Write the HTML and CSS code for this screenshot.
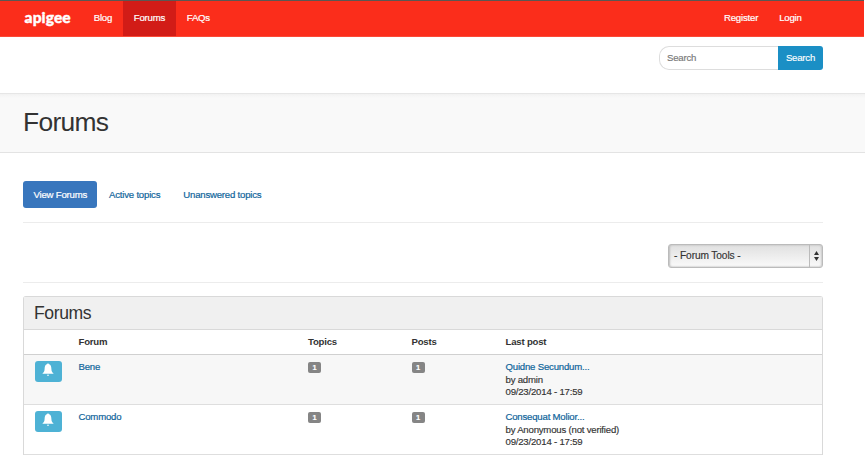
FILE: index.html
```html
<!DOCTYPE html>
<html lang="en">
<head>
<meta charset="utf-8">
<title>Forums</title>
<link rel="stylesheet" href="styles.css">
</head>
<body>
<nav class="navbar">
  <a class="brand">apigee</a>
  <a class="nav-link">Blog</a>
  <a class="nav-link active">Forums</a>
  <a class="nav-link">FAQs</a>
  <div class="account"><a>Register</a><a>Login</a></div>
</nav>
<form class="search">
  <input class="search-input" type="text" placeholder="Search">
  <button class="search-button" type="button">Search</button>
</form>
<header class="page-header"><h1>Forums</h1></header>
<main class="content">
  <div class="tabs">
    <a class="tab selected">View Forums</a>
    <a class="tab">Active topics</a>
    <a class="tab">Unanswered topics</a>
  </div>
  <div class="tools">
    <div class="select"><span class="select-label">- Forum Tools -</span>
      <span class="select-arrows"><svg width="5" height="10" viewBox="0 0 5 10"><path d="M0 4L2.5 0L5 4ZM0 6H5L2.5 10Z" fill="#333"/></svg></span>
    </div>
  </div>
  <section class="panel">
    <h2>Forums</h2>
    <div class="row head"><span></span><span>Forum</span><span>Topics</span><span>Posts</span><span>Last post</span></div>
    <div class="row striped">
      <span class="bell"><svg width="12" height="14" viewBox="0 0 12 14"><path d="M5.2 1.1Q6 -.4 6.8 1.1C8.9 1.7 9.3 3.8 9.4 6C9.5 8.2 10 9.3 11.4 10.2V10.8H.6V10.2C2 9.3 2.5 8.2 2.6 6C2.7 3.8 3.1 1.7 5.2 1.1ZM4.9 11.7H7.1Q6 14.2 4.9 11.7Z" fill="#fff"/></svg></span>
      <a>Bene</a><span><b class="badge">1</b></span><span><b class="badge">1</b></span>
      <div><a>Quidne Secundum...</a><br>by admin<br>09/23/2014 - 17:59</div>
    </div>
    <div class="row">
      <span class="bell"><svg width="12" height="14" viewBox="0 0 12 14"><path d="M5.2 1.1Q6 -.4 6.8 1.1C8.9 1.7 9.3 3.8 9.4 6C9.5 8.2 10 9.3 11.4 10.2V10.8H.6V10.2C2 9.3 2.5 8.2 2.6 6C2.7 3.8 3.1 1.7 5.2 1.1ZM4.9 11.7H7.1Q6 14.2 4.9 11.7Z" fill="#fff"/></svg></span>
      <a>Commodo</a><span><b class="badge">1</b></span><span><b class="badge">1</b></span>
      <div><a>Consequat Molior...</a><br>by Anonymous (not verified)<br>09/23/2014 - 17:59</div>
    </div>
  </section>
</main>
</body>
</html>
```
FILE: styles.css
```css
* { box-sizing: border-box; }
html { background: #fff; overflow: hidden; }
body {
  margin: 0;
  height: 456px;
  overflow: hidden;
  color: #333;
  font: 9.6px/12.5px "Liberation Sans", Arial, sans-serif;
  letter-spacing: -.2px;
  -webkit-text-stroke: .15px;
}
a { color: #0f659b; -webkit-text-stroke: .2px; }
.navbar {
  display: flex;
  height: 37px;
  margin-right: 1px;
  padding-left: 24px;
  border-top: 1px solid #5b5753;
  border-bottom: 1px solid #fa4a37;
  background: #fb2d1b;
  line-height: 34px;
}
.navbar a { color: #fff; }
.navbar .brand {
  width: 59px;
  padding-left: .6px;
  font: 900 15.6px/33px Lato, sans-serif;
  letter-spacing: .05px;
  -webkit-text-stroke: .4px;
}
.nav-link { padding: 0 10.7px; }
.nav-link.active { width: 53px; margin-left: .3px; background: #d21c17; }
.account { display: flex; gap: 21px; margin-left: auto; padding-right: 62.4px; }
.search {
  display: flex;
  justify-content: flex-end;
  height: 56px;
  margin: 0;
  padding: 9px 42px 0 0;
}
.search-input {
  width: 119px;
  height: 24px;
  padding: 0 6px 1px 7px;
  border: 1px solid #ddd;
  border-right: 0;
  border-radius: 10px 0 0 10px;
  font: inherit;
  letter-spacing: inherit;
}
.search-input::placeholder { color: #777; opacity: 1; }
.search-button {
  width: 45px;
  height: 24px;
  padding: 1px 0 0;
  border: 0;
  border-radius: 0 3px 3px 0;
  background: #1b8fc5;
  color: #fff;
  font: inherit;
  letter-spacing: inherit;
}
.page-header {
  height: 60px;
  padding: 12px 23px 0;
  border-top: 1px solid #e6e6e6;
  border-bottom: 1px solid #e3e3e3;
  background: linear-gradient(#f2f2f2, #f9f9f9 4px);
}
h1, h2 { margin: 0; font-weight: 400; -webkit-text-stroke: 0; }
h1 { font-size: 26.4px; line-height: 32px; letter-spacing: -.7px; }
.content { padding: 28px 42px 0 23px; }
.tabs {
  display: flex;
  height: 42px;
  border-bottom: 1px solid #ececec;
}
.tab { height: 27px; margin-right: 1px; padding: 0 11px; line-height: 27px; white-space: nowrap; }
.tab.selected { width: 74px; padding: 0 10.5px; border-radius: 3px; background: #3876bd; color: #fff; }
.tools {
  display: flex;
  justify-content: flex-end;
  height: 60px;
  padding-top: 21px;
  border-bottom: 1px solid #ececec;
}
.select {
  display: flex;
  width: 155px;
  height: 24px;
  border: 1px solid #bbb;
  border-radius: 3px;
  background: linear-gradient(#e0e0e0, #fafafa);
  box-shadow: inset 1px 0 2px #bbb, inset -1px 0 2px #ccc;
}
.select-label { flex: 1; padding-left: 5px; font-size: 10.2px; line-height: 21px; letter-spacing: -.12px; }
.select-arrows {
  display: flex;
  align-items: center;
  justify-content: center;
  width: 13px;
  border-left: 1px solid #bbb;
}
.panel {
  margin-top: 13px;
  border: 1px solid #d9d9d9;
  border-bottom: 0;
  border-radius: 3px 3px 0 0;
}
h2 {
  height: 33px;
  padding-left: 10px;
  border-bottom: 1px solid #d9d9d9;
  background: #f0f0f0;
  font-size: 17.6px;
  line-height: 32px;
  letter-spacing: -.4px;
}
.row {
  display: grid;
  grid-template-columns: 44px 229.5px 103.5px 94px 1fr;
  height: 50px;
  padding: 6px 0 0 10.5px;
  border-bottom: 1px solid #dedede;
}
.head { height: 25px; border-bottom-color: #d0d0d0; font-weight: 700; -webkit-text-stroke: 0; }
.striped { background: #f7f7f7; }
.bell {
  display: flex;
  justify-content: center;
  width: 27px;
  height: 21px;
  padding-top: 2px;
  border-radius: 3px;
  background: #4eb2d5;
}
.badge {
  display: block;
  width: 13px;
  height: 11px;
  margin-top: 1px;
  border-radius: 2px;
  background: #858585;
  color: #fff;
  font-size: 7.5px;
  line-height: 11px;
  text-align: center;
}
```
